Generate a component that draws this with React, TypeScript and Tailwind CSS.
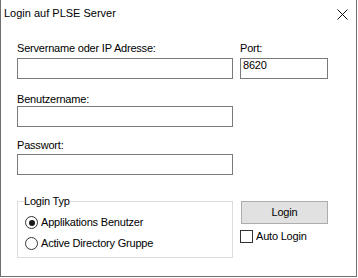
import React from "react";

const font = { fontFamily: '"Liberation Sans", Arial, sans-serif' };

const Field = ({ value = "", className = "" }: { value?: string; className?: string }) => (
  <div className={`h-[21px] border border-[#7a7a7a] bg-white pl-[2px] text-[11px] leading-[13px] text-black ${className}`}>
    {value}
  </div>
);

const Radio = ({ checked, label }: { checked?: boolean; label: string }) => (
  <div className="flex h-[21px] items-center gap-[3px]">
    <div className="flex h-[13px] w-[13px] items-center justify-center rounded-full border border-[#333333] bg-white">
      {checked && <div className="h-[6px] w-[6px] rounded-full bg-[#1a1a1a]" />}
    </div>
    <span>{label}</span>
  </div>
);

export default function App() {
  return (
    <div className="h-[278px] w-[358px] bg-white text-[11px] leading-[13px] tracking-[-0.2px] text-black" style={font}>
      <div className="flex h-[277px] w-[357px] flex-col border-x border-b border-[#6f6f6f] bg-white">
        {/* title bar */}
        <div className="flex h-[30px] items-start justify-between pl-[3px] pr-[8px] pt-[7px]">
          <span className="tracking-normal">Login auf PLSE Server</span>
          <svg width="11" height="11" viewBox="0 0 11 11" className="mt-[2px]">
            <path d="M0.5 0.5 L10.5 10.5 M10.5 0.5 L0.5 10.5" stroke="#111" strokeWidth="1" />
          </svg>
        </div>

        <div className="flex flex-col pl-[16px]">
          <div className="mt-[12px] flex gap-[7px]">
            <div className="flex w-[216px] flex-col">
              <span>Servername oder IP Adresse:</span>
              <Field className="mt-[3px]" />
            </div>
            <div className="flex w-[88px] flex-col">
              <span>Port:</span>
              <Field className="mt-[3px]" value="8620" />
            </div>
          </div>

          <span className="mt-[14px]">Benutzername:</span>
          <Field className="w-[216px]" />

          <span className="mt-[12px]">Passwort:</span>
          <Field className="mt-[2px] w-[216px]" />

          <div className="mt-[20px] flex items-start">
            <fieldset className="h-[63px] w-[216px] border border-[#dcdcdc] pl-[7px] pr-[6px]">
              <legend className="ml-[-1px] px-0">Login Typ</legend>
              <div className="mt-[4px] flex flex-col">
                <Radio checked label="Applikations Benutzer" />
                <Radio label="Active Directory Gruppe" />
              </div>
            </fieldset>
            <div className="ml-[7px] mt-[6px] flex flex-col">
              <button className="ml-[1px] h-[23px] w-[87px] border border-[#adadad] bg-[#e1e1e1] text-center leading-[13px]">
                Login
              </button>
              <div className="mt-[6px] flex items-center gap-[3px]">
                <div className="h-[13px] w-[13px] border border-[#333333] bg-white" />
                <span>Auto Login</span>
              </div>
            </div>
          </div>
        </div>
      </div>
    </div>
  );
}
